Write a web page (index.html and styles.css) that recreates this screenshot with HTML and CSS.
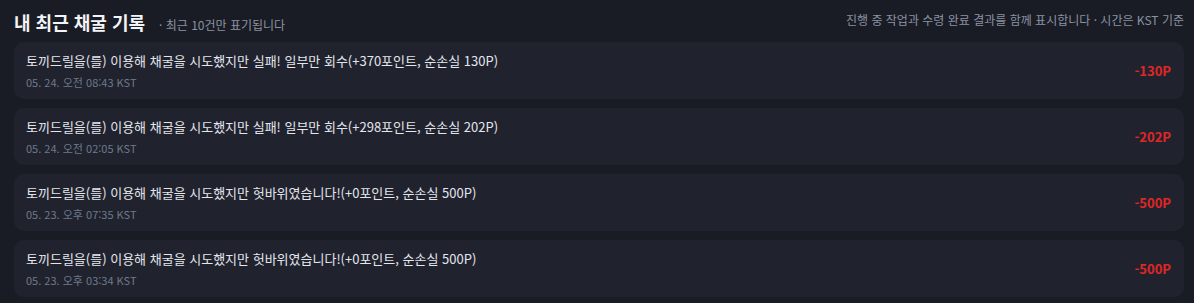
FILE: index.html
```html
<!DOCTYPE html>
<html lang="ko">
<head>
    <meta charset="UTF-8">
    <meta name="viewport" content="width=device-width, initial-scale=1.0">
    <title>내 최근 채굴 기록</title>
    <link rel="stylesheet" href="styles.css">
</head>
<body>
    <div class="container">
        <div class="header">
            <div class="header-left">
                <h1>내 최근 채굴 기록</h1>
                <span class="sub">· 최근 10건만 표기됩니다</span>
            </div>
            <div class="note">진행 중 작업과 수령 완료 결과를 함께 표시합니다 · 시간은 KST 기준</div>
        </div>

        <div class="list">
            <div class="item">
                <div class="info">
                    <div class="msg">토끼드릴을(를) 이용해 채굴을 시도했지만 실패! 일부만 회수(+370포인트, 순손실 130P)</div>
                    <div class="date">05. 24. 오전 08:43 KST</div>
                </div>
                <div class="amount">-130P</div>
            </div>
            <div class="item">
                <div class="info">
                    <div class="msg">토끼드릴을(를) 이용해 채굴을 시도했지만 실패! 일부만 회수(+298포인트, 순손실 202P)</div>
                    <div class="date">05. 24. 오전 02:05 KST</div>
                </div>
                <div class="amount">-202P</div>
            </div>
            <div class="item">
                <div class="info">
                    <div class="msg">토끼드릴을(를) 이용해 채굴을 시도했지만 헛바위였습니다!(+0포인트, 순손실 500P)</div>
                    <div class="date">05. 23. 오후 07:35 KST</div>
                </div>
                <div class="amount">-500P</div>
            </div>
            <div class="item">
                <div class="info">
                    <div class="msg">토끼드릴을(를) 이용해 채굴을 시도했지만 헛바위였습니다!(+0포인트, 순손실 500P)</div>
                    <div class="date">05. 23. 오후 03:34 KST</div>
                </div>
                <div class="amount">-500P</div>
            </div>
        </div>
    </div>
</body>
</html>
```

FILE: styles.css
```css
body {
    margin: 0;
    background-color: #1a1c25;
    font-family: "Noto Sans CJK KR", "Noto Sans", sans-serif;
    color: #e4e6ec;
}
.container {
    padding: 5px 10px 0 14px;
}
.header {
    display: flex;
    justify-content: space-between;
    align-items: flex-end;
    height: 29px;
    margin-bottom: 8px;
}
.header-left {
    display: flex;
    align-items: baseline;
    gap: 14px;
}
h1 {
    margin: 0;
    font-size: 18px;
    font-weight: bold;
    color: #f3f4f7;
    line-height: 24px;
}
.sub {
    font-size: 12px;
    color: #8a92a3;
}
.note {
    font-size: 12px;
    color: #8a92a3;
    line-height: 16px;
    margin-bottom: 6px;
}
.list {
    display: flex;
    flex-direction: column;
    gap: 9px;
}
.item {
    display: flex;
    align-items: center;
    justify-content: space-between;
    background-color: #20232e;
    border-radius: 10px;
    padding: 9px 13px 9px 12px;
}
.msg {
    font-size: 13px;
    line-height: 20px;
    color: #e4e6ec;
}
.date {
    font-size: 11px;
    line-height: 16px;
    margin-top: 3px;
    color: #6f798b;
}
.amount {
    font-size: 13px;
    font-weight: bold;
    color: #e02626;
}
```
